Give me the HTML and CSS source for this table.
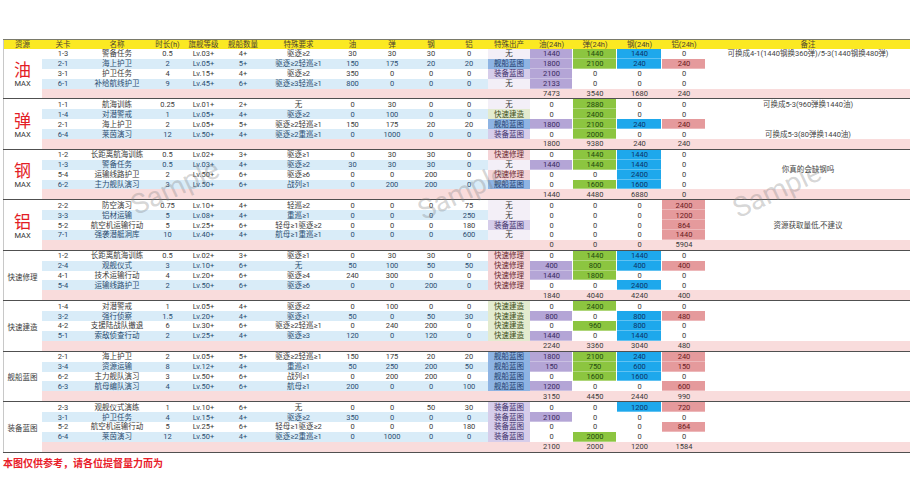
FILE: index.html
```html
<!DOCTYPE html>
<html lang="zh-CN">
<head>
<meta charset="utf-8">
<link rel="stylesheet" href="styles.css">
</head>
<body>
<div class="page">
<table class="sheet">
<colgroup>
<col style="width:39px"><col style="width:42px"><col style="width:66px"><col style="width:35px"><col style="width:37px"><col style="width:42px"><col style="width:69px"><col style="width:39px"><col style="width:40px"><col style="width:38px"><col style="width:38px"><col style="width:42px"><col style="width:43px"><col style="width:44px"><col style="width:45px"><col style="width:44px"><col style="width:204px">
</colgroup>
<thead>
<tr><th class="first">资源</th><th>关卡</th><th>名称</th><th>时长(h)</th><th>旗舰等级</th><th>舰船数量</th><th>特殊要求</th><th>油</th><th>弹</th><th>钢</th><th>铝</th><th>特殊出产</th><th>油(24h)</th><th>弹(24h)</th><th>钢(24h)</th><th>铝(24h)</th><th>备注</th></tr>
</thead>
<tbody>
<tr><td class="res" rowspan="5"><span class="big">油</span><span class="max">MAX</span></td><td>1-3</td><td>警备任务</td><td>0.5</td><td>Lv.03+</td><td>4+</td><td>驱逐≥2</td><td>30</td><td>30</td><td>30</td><td>0</td><td class="pn">无</td><td class="o">1440</td><td class="a">1440</td><td class="t">1440</td><td>0</td><td class="note">可换成4-1(1440钢换360弹)/5-3(1440钢换480弹)</td></tr>
<tr class="s"><td>2-1</td><td>海上护卫</td><td>2</td><td>Lv.05+</td><td>5+</td><td>驱逐≥2轻巡≥1</td><td>150</td><td>175</td><td>20</td><td>20</td><td class="ps">舰船蓝图</td><td class="o">1800</td><td class="a">2100</td><td class="t">240</td><td class="l">240</td><td></td></tr>
<tr><td>3-1</td><td>护卫任务</td><td>4</td><td>Lv.15+</td><td>4+</td><td>驱逐≥2</td><td>350</td><td>0</td><td>0</td><td>0</td><td class="pe">装备蓝图</td><td class="o">2100</td><td>0</td><td>0</td><td>0</td><td></td></tr>
<tr class="s"><td>6-1</td><td>补给航线护卫</td><td>9</td><td>Lv.45+</td><td>6+</td><td>驱逐≥3轻巡≥1</td><td>800</td><td>0</td><td>0</td><td>0</td><td class="pn">无</td><td class="o">2133</td><td>0</td><td>0</td><td>0</td><td></td></tr>
<tr class="tot"><td colspan="11"></td><td>7473</td><td>3540</td><td>1680</td><td>240</td><td></td></tr>
</tbody>
<tbody>
<tr><td class="res" rowspan="5"><span class="big">弹</span><span class="max">MAX</span></td><td>1-1</td><td>航海训练</td><td>0.25</td><td>Lv.01+</td><td>2+</td><td>无</td><td>0</td><td>30</td><td>0</td><td>0</td><td class="pn">无</td><td>0</td><td class="a">2880</td><td>0</td><td>0</td><td class="note">可换成5-3(960弹换1440油)</td></tr>
<tr class="s"><td>1-4</td><td>对潜警戒</td><td>1</td><td>Lv.05+</td><td>4+</td><td>驱逐≥2</td><td>0</td><td>100</td><td>0</td><td>0</td><td class="pb">快速建造</td><td>0</td><td class="a">2400</td><td>0</td><td>0</td><td></td></tr>
<tr><td>2-1</td><td>海上护卫</td><td>2</td><td>Lv.05+</td><td>5+</td><td>驱逐≥2轻巡≥1</td><td>150</td><td>175</td><td>20</td><td>20</td><td class="ps">舰船蓝图</td><td class="o">1800</td><td class="a">2100</td><td class="t">240</td><td class="l">240</td><td></td></tr>
<tr class="s"><td>6-4</td><td>莱茵演习</td><td>12</td><td>Lv.50+</td><td>4+</td><td>驱逐≥2重巡≥1</td><td>0</td><td>1000</td><td>0</td><td>0</td><td class="pe">装备蓝图</td><td>0</td><td class="a">2000</td><td>0</td><td>0</td><td class="note">可换成5-3(80弹换1440油)</td></tr>
<tr class="tot"><td colspan="11"></td><td>1800</td><td>9380</td><td>240</td><td>240</td><td></td></tr>
</tbody>
<tbody>
<tr><td class="res" rowspan="5"><span class="big">钢</span><span class="max">MAX</span></td><td>1-2</td><td>长距离航海训练</td><td>0.5</td><td>Lv.02+</td><td>3+</td><td>驱逐≥1</td><td>0</td><td>30</td><td>30</td><td>0</td><td class="pr">快速修理</td><td>0</td><td class="a">1440</td><td class="t">1440</td><td>0</td><td class="note" rowspan="4">你真的会缺钢吗</td></tr>
<tr class="s"><td>1-3</td><td>警备任务</td><td>0.5</td><td>Lv.03+</td><td>4+</td><td>驱逐≥2</td><td>30</td><td>30</td><td>30</td><td>0</td><td class="pn">无</td><td class="o">1440</td><td class="a">1440</td><td class="t">1440</td><td>0</td></tr>
<tr><td>5-4</td><td>运输线路护卫</td><td>2</td><td>Lv.50+</td><td>6+</td><td>驱逐≥6</td><td>0</td><td>0</td><td>200</td><td>0</td><td class="pr">快速修理</td><td>0</td><td>0</td><td class="t">2400</td><td>0</td></tr>
<tr class="s"><td>6-2</td><td>主力舰队演习</td><td>3</td><td>Lv.50+</td><td>6+</td><td>战列≥1</td><td>0</td><td>200</td><td>200</td><td>0</td><td class="ps">舰船蓝图</td><td>0</td><td class="a">1600</td><td class="t">1600</td><td>0</td></tr>
<tr class="tot"><td colspan="11"></td><td>1440</td><td>4480</td><td>6880</td><td>0</td><td></td></tr>
</tbody>
<tbody>
<tr><td class="res" rowspan="5"><span class="big">铝</span><span class="max">MAX</span></td><td>2-2</td><td>防空演习</td><td>0.75</td><td>Lv.10+</td><td>4+</td><td>轻巡≥2</td><td>0</td><td>0</td><td>0</td><td>75</td><td class="pn">无</td><td>0</td><td>0</td><td>0</td><td class="l">2400</td><td></td></tr>
<tr class="s"><td>3-3</td><td>铝材运输</td><td>5</td><td>Lv.08+</td><td>4+</td><td>重巡≥1</td><td>0</td><td>0</td><td>0</td><td>250</td><td class="pn">无</td><td>0</td><td>0</td><td>0</td><td class="l">1200</td><td></td></tr>
<tr><td>5-2</td><td>航空机运输行动</td><td>5</td><td>Lv.25+</td><td>6+</td><td>轻母≥1驱逐≥2</td><td>0</td><td>0</td><td>0</td><td>180</td><td class="pe">装备蓝图</td><td>0</td><td>0</td><td>0</td><td class="l">864</td><td class="note">资源获取量低,不建议</td></tr>
<tr class="s"><td>7-1</td><td>强袭潜艇洞库</td><td>10</td><td>Lv.40+</td><td>4+</td><td>航母≥1重巡≥1</td><td>0</td><td>0</td><td>0</td><td>600</td><td class="pn">无</td><td>0</td><td>0</td><td>0</td><td class="l">1440</td><td></td></tr>
<tr class="tot"><td colspan="11"></td><td>0</td><td>0</td><td>0</td><td>5904</td><td></td></tr>
</tbody>
<tbody>
<tr><td class="res" rowspan="5"><span class="cat">快速修理</span></td><td>1-2</td><td>长距离航海训练</td><td>0.5</td><td>Lv.02+</td><td>3+</td><td>驱逐≥1</td><td>0</td><td>30</td><td>30</td><td>0</td><td class="pr">快速修理</td><td>0</td><td class="a">1440</td><td class="t">1440</td><td>0</td><td></td></tr>
<tr class="s"><td>2-4</td><td>观舰仪式</td><td>3</td><td>Lv.10+</td><td>6+</td><td>无</td><td>50</td><td>100</td><td>50</td><td>50</td><td class="pr">快速修理</td><td class="o">400</td><td class="a">800</td><td class="t">400</td><td class="l">400</td><td></td></tr>
<tr><td>4-1</td><td>技术运输行动</td><td>4</td><td>Lv.20+</td><td>6+</td><td>驱逐≥4</td><td>240</td><td>300</td><td>0</td><td>0</td><td class="pr">快速修理</td><td class="o">1440</td><td class="a">1800</td><td>0</td><td>0</td><td></td></tr>
<tr class="s"><td>5-4</td><td>运输线路护卫</td><td>2</td><td>Lv.50+</td><td>6+</td><td>驱逐≥6</td><td>0</td><td>0</td><td>200</td><td>0</td><td class="pr">快速修理</td><td>0</td><td>0</td><td class="t">2400</td><td>0</td><td></td></tr>
<tr class="tot"><td colspan="11"></td><td>1840</td><td>4040</td><td>4240</td><td>400</td><td></td></tr>
</tbody>
<tbody>
<tr><td class="res" rowspan="5"><span class="cat">快速建造</span></td><td>1-4</td><td>对潜警戒</td><td>1</td><td>Lv.05+</td><td>4+</td><td>驱逐≥2</td><td>0</td><td>100</td><td>0</td><td>0</td><td class="pb">快速建造</td><td>0</td><td class="a">2400</td><td>0</td><td>0</td><td></td></tr>
<tr class="s"><td>3-2</td><td>强行侦察</td><td>1.5</td><td>Lv.20+</td><td>4+</td><td>驱逐≥1</td><td>50</td><td>0</td><td>50</td><td>30</td><td class="pb">快速建造</td><td class="o">800</td><td>0</td><td class="t">800</td><td class="l">480</td><td></td></tr>
<tr><td>4-2</td><td>支援陆战队撤退</td><td>6</td><td>Lv.30+</td><td>6+</td><td>驱逐≥2轻巡≥1</td><td>0</td><td>240</td><td>200</td><td>0</td><td class="pb">快速建造</td><td>0</td><td class="a">960</td><td class="t">800</td><td>0</td><td></td></tr>
<tr class="s"><td>5-1</td><td>索敌侦查行动</td><td>2</td><td>Lv.25+</td><td>4+</td><td>驱逐≥3</td><td>120</td><td>0</td><td>120</td><td>0</td><td class="pb">快速建造</td><td class="o">1440</td><td>0</td><td class="t">1440</td><td>0</td><td></td></tr>
<tr class="tot"><td colspan="11"></td><td>2240</td><td>3360</td><td>3040</td><td>480</td><td></td></tr>
</tbody>
<tbody>
<tr><td class="res" rowspan="5"><span class="cat">舰船蓝图</span></td><td>2-1</td><td>海上护卫</td><td>2</td><td>Lv.05+</td><td>5+</td><td>驱逐≥2轻巡≥1</td><td>150</td><td>175</td><td>20</td><td>20</td><td class="ps">舰船蓝图</td><td class="o">1800</td><td class="a">2100</td><td class="t">240</td><td class="l">240</td><td></td></tr>
<tr class="s"><td>3-4</td><td>资源运输</td><td>8</td><td>Lv.12+</td><td>4+</td><td>重巡≥1</td><td>50</td><td>250</td><td>200</td><td>50</td><td class="ps">舰船蓝图</td><td class="o">150</td><td class="a">750</td><td class="t">600</td><td class="l">150</td><td></td></tr>
<tr><td>6-2</td><td>主力舰队演习</td><td>3</td><td>Lv.50+</td><td>6+</td><td>战列≥1</td><td>0</td><td>200</td><td>200</td><td>0</td><td class="ps">舰船蓝图</td><td>0</td><td class="a">1600</td><td class="t">1600</td><td>0</td><td></td></tr>
<tr class="s"><td>6-3</td><td>航母编队演习</td><td>4</td><td>Lv.50+</td><td>6+</td><td>航母≥1</td><td>200</td><td>0</td><td>0</td><td>100</td><td class="ps">舰船蓝图</td><td class="o">1200</td><td>0</td><td>0</td><td class="l">600</td><td></td></tr>
<tr class="tot"><td colspan="11"></td><td>3150</td><td>4450</td><td>2440</td><td>990</td><td></td></tr>
</tbody>
<tbody>
<tr><td class="res" rowspan="5"><span class="cat">装备蓝图</span></td><td>2-3</td><td>观舰仪式演练</td><td>1</td><td>Lv.10+</td><td>6+</td><td>无</td><td>0</td><td>0</td><td>50</td><td>30</td><td class="pe">装备蓝图</td><td>0</td><td>0</td><td class="t">1200</td><td class="l">720</td><td></td></tr>
<tr class="s"><td>3-1</td><td>护卫任务</td><td>4</td><td>Lv.15+</td><td>4+</td><td>驱逐≥2</td><td>350</td><td>0</td><td>0</td><td>0</td><td class="pe">装备蓝图</td><td class="o">2100</td><td>0</td><td>0</td><td>0</td><td></td></tr>
<tr><td>5-2</td><td>航空机运输行动</td><td>5</td><td>Lv.25+</td><td>6+</td><td>轻母≥1驱逐≥2</td><td>0</td><td>0</td><td>0</td><td>180</td><td class="pe">装备蓝图</td><td>0</td><td>0</td><td>0</td><td class="l">864</td><td></td></tr>
<tr class="s"><td>6-4</td><td>莱茵演习</td><td>12</td><td>Lv.50+</td><td>4+</td><td>驱逐≥2重巡≥1</td><td>0</td><td>1000</td><td>0</td><td>0</td><td class="pe">装备蓝图</td><td>0</td><td class="a">2000</td><td>0</td><td>0</td><td></td></tr>
<tr class="tot"><td colspan="11"></td><td>2100</td><td>2000</td><td>1200</td><td>1584</td><td></td></tr>
</tbody>
</table>
<p class="foot">本图仅供参考，请各位提督量力而为</p>
<span class="wm wm1">Sample</span>
<span class="wm wm2">Sample</span>
<span class="wm wm3">Sample</span>
</div>
</body>
</html>
```
FILE: styles.css
```css
html, body {
  margin: 0;
  background: #ffffff;
}
body {
  font-family: Roboto, "Noto Sans CJK SC", sans-serif;
}
.page {
  position: relative;
  width: 913px;
  height: 500px;
  padding: 39px 3px 0;
  box-sizing: border-box;
  overflow: hidden;
}
.sheet {
  border-collapse: separate;
  border-spacing: 0;
  table-layout: fixed;
  width: 907px;
  font-size: 7.5px;
  color: #3a3a3a;
}
.sheet th {
  background: #fbe922;
  height: 9px;
  line-height: 9px;
  padding: 0;
  border-top: 1px solid #7a7a6a;
  font-weight: normal;
  color: #4e4630;
  white-space: nowrap;
  overflow: hidden;
}
.sheet th.first {
  box-shadow: inset 1px 0 0 #c8c8c8;
}
.sheet tr {
  height: 9.9px;
}
.sheet td {
  padding: 0;
  height: 9.9px;
  line-height: 9px;
  text-align: center;
  white-space: nowrap;
  overflow: hidden;
}
.sheet tr.tot {
  height: 10.9px;
}
.sheet tr.tot td {
  background: #f9dcdc;
  color: #3a3a3a;
  border-bottom: 1px solid #505050;
}
.sheet td.res {
  background: #ffffff;
  border-bottom: 1px solid #505050;
  box-shadow: inset 1px 0 0 #c8c8c8;
  vertical-align: middle;
  padding-top: 3px;
}
.sheet tr.s td:nth-child(-n+10) {
  background: #d9ecf8;
  color: #2b4c70;
}
.big {
  display: block;
  font-size: 17px;
  line-height: 17px;
  color: #e31d25;
}
.max {
  display: block;
  font-size: 7.5px;
  line-height: 9px;
  color: #333333;
}
.cat {
  color: #3a3a3a;
  font-size: 7.5px;
}
.sheet td.note {
  color: #444444;
  vertical-align: middle;
}
.sheet td.pn { background: #f3eff7; }
.sheet td.ps { background: #8eb4e3; color: #1d3c6e; }
.sheet td.pe { background: #d6cdea; color: #40306a; }
.sheet td.pb { background: #e3ebcf; color: #3f5020; }
.sheet td.pr { background: #f5d4d7; color: #6a2a30; }
.sheet td.o, .sheet td.a, .sheet td.t, .sheet td.l {
  box-shadow: inset -1px 0 0 #ffffff, inset 0 -0.5px 0 rgba(255,255,255,0.6);
}
.sheet td.o { background: #b4a5d6; color: #3a2a60; }
.sheet td.a { background: #8cc540; color: #1f4a0f; }
.sheet td.t { background: #1ea8ec; color: #0c3466; }
.sheet td.l { background: #e59a9c; color: #6b1b1f; }
.foot {
  margin: 5px 0 0;
  font-size: 10px;
  line-height: 12px;
  font-weight: bold;
  color: #e8202a;
}
.wm {
  position: absolute;
  font-family: Roboto, sans-serif;
  font-size: 28px;
  color: rgba(130, 130, 130, 0.32);
  transform: translate(-50%, -50%) rotate(-25deg);
  white-space: nowrap;
  pointer-events: none;
}
.wm1 { left: 175px; top: 187px; }
.wm2 { left: 462px; top: 192px; }
.wm3 { left: 777px; top: 190px; }
```
